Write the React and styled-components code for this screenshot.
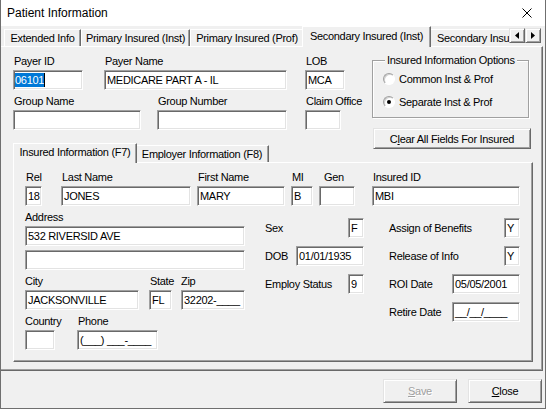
import React from 'react';
import styled, { createGlobalStyle } from 'styled-components';

const GlobalStyle = createGlobalStyle`
    html, body {
        margin: 0;
        padding: 0;
        background: #fff;
    }

    body {
        font-family: "Liberation Sans", Arial, sans-serif;
        font-size: 11px;
        letter-spacing: -0.3px;
        color: #000;
    }
`;

const Window = styled.div`
    box-sizing: border-box;
    width: 546px;
    height: 409px;
    background: #f0f0f0;
    border: 1px solid #6f6f6f;
    border-top: none;
    display: flex;
    flex-direction: column;
    overflow: hidden;
`;

const TitleBar = styled.div`
    flex: none;
    height: 26px;
    background: #fff;
    display: flex;
    align-items: center;
    justify-content: space-between;
    padding: 0 13px 0 6px;
    font-size: 12px;
    letter-spacing: 0;
`;

const TabStrip = styled.div`
    flex: none;
    position: relative;
    display: flex;
    align-items: flex-end;
    height: ${(p) => p.$h}px;
    padding-left: ${(p) => p.$pad}px;
    margin-top: ${(p) => p.$mt || 0}px;
`;

const Tab = styled.div`
    box-sizing: border-box;
    flex: none;
    position: relative;
    z-index: ${(p) => (p.$active ? 2 : 1)};
    width: ${(p) => p.$w}px;
    height: ${(p) => (p.$active ? p.$tall : 17)}px;
    margin: 0 ${(p) => (p.$active ? -2 : 0)}px ${(p) => (p.$active ? -1 : 0)}px;
    padding: 0 0 ${(p) => (p.$active ? 3 : 0)}px ${(p) => (p.$clipped ? 7 : 0)}px;
    background: #f0f0f0;
    border: 1px solid #fff;
    border-bottom: none;
    border-right: ${(p) => (p.$clipped ? 'none' : '1px solid #696969')};
    box-shadow: ${(p) => (p.$clipped ? 'none' : 'inset -1px 0 0 #a0a0a0')};
    display: flex;
    align-items: center;
    justify-content: ${(p) => (p.$clipped ? 'flex-start' : 'center')};
    white-space: nowrap;
    overflow: hidden;
`;

const ScrollArrows = styled.div`
    position: absolute;
    z-index: 3;
    left: 508px;
    top: 2px;
    display: flex;
`;

const ArrowButton = styled.div`
    box-sizing: border-box;
    width: 16px;
    height: 15px;
    background: #f0f0f0;
    border: 1px solid;
    border-color: #e3e3e3 #696969 #696969 #e3e3e3;
    box-shadow: inset 1px 1px 0 #fff, inset -1px -1px 0 #a0a0a0;
    display: flex;
    align-items: center;
    justify-content: center;
`;

const OuterPanel = styled.div`
    box-sizing: border-box;
    flex: none;
    height: 325px;
    margin-right: 2px;
    border-top: 1px solid #fff;
    border-right: 1px solid #696969;
    border-bottom: 1px solid #696969;
    box-shadow: inset -1px -1px 0 #a0a0a0;
    padding: 8px 0 0 12px;
    display: flex;
    flex-direction: column;
`;

const TopSection = styled.div`
    flex: none;
    display: flex;
    align-items: flex-start;
    height: 75px;
`;

const FieldColumn = styled.div`
    flex: none;
    display: flex;
    flex-direction: column;
    align-items: flex-start;
    gap: 5px;
    width: ${(p) => p.$w}px;
    margin-left: ${(p) => p.$ml || 0}px;
`;

const FieldRow = styled.div`
    display: flex;
    align-items: flex-start;
    margin-top: ${(p) => p.$mt || 0}px;
`;

const Field = styled.div`
    flex: none;
    display: flex;
    flex-direction: column;
    width: ${(p) => p.$w}px;
    margin-left: ${(p) => p.$ml || 0}px;
`;

const Label = styled.div`
    height: 13px;
    line-height: 13px;
    padding-left: ${(p) => (p.$indent === undefined ? 1 : p.$indent)}px;
    margin-bottom: 2px;
    white-space: nowrap;
`;

const TextBox = styled.div`
    box-sizing: border-box;
    flex: none;
    width: ${(p) => (p.$w ? `${p.$w}px` : '100%')};
    height: ${(p) => p.$h || 20}px;
    margin-top: ${(p) => p.$mt || 0}px;
    padding-left: 2px;
    background: #fff;
    border: 1px solid;
    border-color: #a0a0a0 #fff #fff #a0a0a0;
    box-shadow: inset 1px 1px 0 #696969, inset -1px -1px 0 #e3e3e3;
    display: flex;
    align-items: center;
    white-space: nowrap;
    overflow: hidden;
`;

const Selected = styled.span`
    margin-left: -1px;
    padding: 1px 0;
    background: #0078d7;
    color: #fff;
`;

const Caret = styled.span`
    width: 1px;
    height: 14px;
    background: #000;
`;

const OptionsColumn = styled.div`
    flex: none;
    margin-left: 27px;
    display: flex;
    flex-direction: column;
`;

const GroupBox = styled.div`
    box-sizing: border-box;
    position: relative;
    width: 157px;
    height: 58px;
    margin-top: 5px;
    padding: 11px 0 0 10px;
    border: 1px solid #a0a0a0;
    box-shadow: inset 1px 1px 0 #fff, 1px 1px 0 #fff;
    display: flex;
    flex-direction: column;
    gap: 9px;
`;

const GroupTitle = styled.div`
    position: absolute;
    top: -7px;
    left: 12px;
    padding: 0 2px;
    line-height: 13px;
    background: #f0f0f0;
    white-space: nowrap;
`;

const RadioRow = styled.div`
    display: flex;
    align-items: center;
    gap: 4px;
    height: 14px;
`;

const RadioDot = styled.span`
    box-sizing: border-box;
    width: 12px;
    height: 12px;
    border-radius: 50%;
    background: #fff;
    border: 1px solid;
    border-color: #a0a0a0 #fff #fff #a0a0a0;
    box-shadow: inset 1px 1px 0 #d0d0d0;
    display: flex;
    align-items: center;
    justify-content: center;

    &::after {
        content: '';
        width: 4px;
        height: 4px;
        border-radius: 50%;
        background: ${(p) => (p.$checked ? '#000' : 'transparent')};
    }
`;

const Button = styled.div`
    box-sizing: border-box;
    flex: none;
    width: ${(p) => p.$w}px;
    height: ${(p) => p.$h}px;
    margin: ${(p) => p.$margin || 0};
    background: #f0f0f0;
    border: 1px solid;
    border-color: #e3e3e3 #696969 #696969 #e3e3e3;
    box-shadow: inset 1px 1px 0 #fff, inset -1px -1px 0 #a0a0a0;
    display: flex;
    align-items: center;
    justify-content: center;
    white-space: nowrap;
    color: ${(p) => (p.$disabled ? '#a0a0a0' : '#000')};
    text-shadow: ${(p) => (p.$disabled ? '1px 1px 0 #fff' : 'none')};
`;

const InnerPanel = styled.div`
    box-sizing: border-box;
    flex: none;
    width: 520px;
    height: 200px;
    border-top: 1px solid #fff;
    border-left: 1px solid #fff;
    border-right: 1px solid #696969;
    border-bottom: 1px solid #696969;
    box-shadow: inset -1px -1px 0 #a0a0a0;
    padding: 8px 0 0 11px;
`;

const BottomArea = styled.div`
    display: flex;
    align-items: flex-start;
`;

const LeftBlock = styled.div`
    flex: none;
    width: 220px;
    padding-top: 5px;
    display: flex;
    flex-direction: column;
`;

const SideBlock = styled.div`
    flex: none;
    width: ${(p) => p.$w}px;
    margin-left: ${(p) => p.$ml}px;
    padding-top: 12px;
    display: flex;
    flex-direction: column;
    gap: 8px;
`;

const SideRow = styled.div`
    display: flex;
    align-items: center;
    justify-content: space-between;
    height: 20px;
    white-space: nowrap;
`;

const ButtonBar = styled.div`
    flex: none;
    display: flex;
    justify-content: flex-end;
    gap: 11px;
    padding: 8px 3px 0 0;
`;

const CloseIcon = () => (
    <svg width="10" height="10" viewBox="0 0 10 10">
        <path d="M0.5 0.5 L9.5 9.5 M9.5 0.5 L0.5 9.5" stroke="#000" strokeWidth="1" fill="none" />
    </svg>
);

const Arrow = ({ dir }) => (
    <svg width="4" height="7" viewBox="0 0 4 7">
        <path d={dir === 'left' ? 'M4 0 L0 3.5 L4 7 Z' : 'M0 0 L4 3.5 L0 7 Z'} fill="#000" />
    </svg>
);

const LabeledBox = ({ label, w, ml, indent, children }) => (
    <Field $w={w} $ml={ml}>
        <Label $indent={indent}>{label}</Label>
        <TextBox>{children}</TextBox>
    </Field>
);

const SideField = ({ label, w, value }) => (
    <SideRow>
        <span>{label}</span>
        <TextBox $w={w}>{value}</TextBox>
    </SideRow>
);

const App = () => (
    <>
        <GlobalStyle />
        <Window>
            <TitleBar>
                <span>Patient Information</span>
                <CloseIcon />
            </TitleBar>

            <TabStrip $h={20} $pad={3}>
                <Tab $w={77}>Extended Info</Tab>
                <Tab $w={109}>Primary Insured (Inst)</Tab>
                <Tab $w={114}>Primary Insured (Prof)</Tab>
                <Tab $w={129} $tall={21} $active>Secondary Insured (Inst)</Tab>
                <Tab $w={80} $clipped>Secondary Insured (Prof)</Tab>
                <ScrollArrows>
                    <ArrowButton><Arrow dir="left" /></ArrowButton>
                    <ArrowButton><Arrow dir="right" /></ArrowButton>
                </ScrollArrows>
            </TabStrip>

            <OuterPanel>
                <TopSection>
                    <FieldColumn $w={274}>
                        <FieldRow>
                            <LabeledBox label="Payer ID" w={70}>
                                <Selected>06101</Selected>
                                <Caret />
                            </LabeledBox>
                            <LabeledBox label="Payer Name" w={183} ml={21}>MEDICARE PART A - IL</LabeledBox>
                        </FieldRow>
                        <FieldRow>
                            <LabeledBox label="Group Name" w={128} />
                            <LabeledBox label="Group Number" w={130} ml={16} />
                        </FieldRow>
                    </FieldColumn>

                    <FieldColumn $w={40} $ml={18}>
                        <LabeledBox label="LOB" w={40}>MCA</LabeledBox>
                        <LabeledBox label="Claim Office" w={36} />
                    </FieldColumn>

                    <OptionsColumn>
                        <GroupBox>
                            <GroupTitle>Insured Information Options</GroupTitle>
                            <RadioRow>
                                <RadioDot />
                                <span>Common Inst &amp; Prof</span>
                            </RadioRow>
                            <RadioRow>
                                <RadioDot $checked />
                                <span>Separate Inst &amp; Prof</span>
                            </RadioRow>
                        </GroupBox>
                        <Button $w={158} $h={21} $margin="10px 0 0 1px">
                            <span>C<u>l</u>ear All Fields For Insured</span>
                        </Button>
                    </OptionsColumn>
                </TopSection>

                <TabStrip $h={19} $pad={2} $mt={13}>
                    <Tab $w={124} $tall={20} $active>Insured Information (F7)</Tab>
                    <Tab $w={134}>Employer Information (F8)</Tab>
                </TabStrip>

                <InnerPanel>
                    <FieldRow>
                        <LabeledBox label="Rel" w={17}>18</LabeledBox>
                        <LabeledBox label="Last Name" w={130} ml={19}>JONES</LabeledBox>
                        <LabeledBox label="First Name" w={88} ml={6}>MARY</LabeledBox>
                        <LabeledBox label="MI" w={22} ml={6}>B</LabeledBox>
                        <LabeledBox label="Gen" w={36} ml={6} indent={5} />
                        <LabeledBox label="Insured ID" w={148} ml={17}>MBI</LabeledBox>
                    </FieldRow>

                    <BottomArea>
                        <LeftBlock>
                            <Label $indent={0}>Address</Label>
                            <TextBox>532 RIVERSID AVE</TextBox>
                            <TextBox $mt={4} />
                            <FieldRow $mt={5}>
                                <LabeledBox label="City" w={114} indent={0}>JACKSONVILLE</LabeledBox>
                                <LabeledBox label="State" w={23} ml={10}>FL</LabeledBox>
                                <LabeledBox label="Zip" w={64} ml={9} indent={0}>32202-____</LabeledBox>
                            </FieldRow>
                            <FieldRow $mt={5}>
                                <LabeledBox label="Country" w={30} indent={0} />
                                <LabeledBox label="Phone" w={81} ml={22}>(___) ___-____</LabeledBox>
                            </FieldRow>
                        </LeftBlock>

                        <SideBlock $w={99} $ml={20}>
                            <SideField label="Sex" w={16} value="F" />
                            <SideField label="DOB" w={68} value="01/01/1935" />
                            <SideField label="Employ Status" w={16} value="9" />
                        </SideBlock>

                        <SideBlock $w={131} $ml={25}>
                            <SideField label="Assign of Benefits" w={16} value="Y" />
                            <SideField label="Release of Info" w={16} value="Y" />
                            <SideField label="ROI Date" w={68} value="05/05/2001" />
                            <SideField label="Retire Date" w={68} value="__/__/____" />
                        </SideBlock>
                    </BottomArea>
                </InnerPanel>
            </OuterPanel>

            <ButtonBar>
                <Button $w={74} $h={24} $disabled>
                    <span><u>S</u>ave</span>
                </Button>
                <Button $w={74} $h={24}>
                    <span><u>C</u>lose</span>
                </Button>
            </ButtonBar>
        </Window>
    </>
);

export default App;
